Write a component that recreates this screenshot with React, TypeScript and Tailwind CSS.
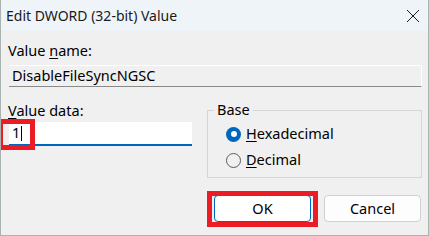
import React from 'react';

const font = { fontFamily: '"Segoe UI", "Noto Sans", sans-serif' };

function Radio({ checked, label, hotkey }: { checked: boolean; label: string; hotkey: string }) {
  return (
    <div className="flex items-center gap-[5px] h-[26px]">
      {checked ? (
        <div className="w-[15px] h-[15px] rounded-full bg-[#0067c0] flex items-center justify-center">
          <div className="w-[6px] h-[6px] rounded-full bg-white" />
        </div>
      ) : (
        <div className="w-[15px] h-[15px] rounded-full border border-[#5c5c5c] bg-[#f0f0f0]" />
      )}
      <span>
        <span className="underline underline-offset-2">{hotkey}</span>
        {label.slice(1)}
      </span>
    </div>
  );
}

export default function App() {
  return (
    <div
      className="relative w-[429px] h-[236px] bg-[#f0f0f0] border-x border-b border-[#a9b4b1] text-[14.5px] text-black flex flex-col overflow-hidden"
      style={font}
    >
      {/* Title bar */}
      <div className="h-[31px] bg-[#eff4f9] flex items-center justify-between pl-[5px] pr-[8px] shrink-0 text-[14px]">
        <span className="text-[#1a1a1a]">Edit DWORD (32-bit) Value</span>
        <svg width="14" height="14" viewBox="0 0 14 14" className="mt-[1px]">
          <path d="M1 1 L13 13 M13 1 L1 13" stroke="#1a1a1a" strokeWidth="1" />
        </svg>
      </div>

      {/* Body */}
      <div className="flex flex-col pl-[7px] pr-[6px] pt-[10px]">
        <div className="leading-[19px]">
          Value <span className="underline underline-offset-2">n</span>ame:
        </div>
        <div className="mt-[5px] ml-[1px] h-[22px] bg-[#f0f0f0] border-t border-r border-white border-b border-b-[#8a8a8a] flex items-center pl-[3px]">
          DisableFileSyncNGSC
        </div>

        <div className="flex mt-[14px]">
          <div className="flex flex-col w-[199px]">
            <div className="leading-[19px]">
              <span className="underline underline-offset-2">V</span>alue data:
            </div>
            <div className="mt-[2px] ml-[1px] w-[183px] h-[24px] bg-white border-b-2 border-[#0067c0] flex items-center pl-[3px]">
              <span>1</span>
              <span className="w-px h-[15px] bg-black ml-[1px]" />
            </div>
          </div>

          <div className="relative flex-1 mt-[9px] h-[68px] border border-[#d5d5d5] pl-[18px] pt-[10px]">
            <span className="absolute -top-[11px] left-[6px] px-[3px] bg-[#f0f0f0] leading-[19px]">Base</span>
            <Radio checked label="Hexadecimal" hotkey="H" />
            <Radio checked={false} label="Decimal" hotkey="D" />
          </div>
        </div>

        <div className="flex justify-end gap-[13px] mt-[17px] pr-[1px]">
          <button className="w-[97px] h-[27px] rounded-[4px] bg-white border border-[#0067c0] flex items-center justify-center">
            OK
          </button>
          <button className="w-[97px] h-[27px] rounded-[4px] bg-[#fdfdfd] border border-[#d0d0d0] flex items-center justify-center">
            Cancel
          </button>
        </div>
      </div>

      {/* Highlight boxes */}
      <div className="absolute left-[-3px] top-[119px] w-[37px] h-[31px] border-[5px] border-[#ec1c24]" />
      <div className="absolute left-[206px] top-[191px] w-[111px] h-[36px] border-[5px] border-[#ec1c24]" />
    </div>
  );
}
